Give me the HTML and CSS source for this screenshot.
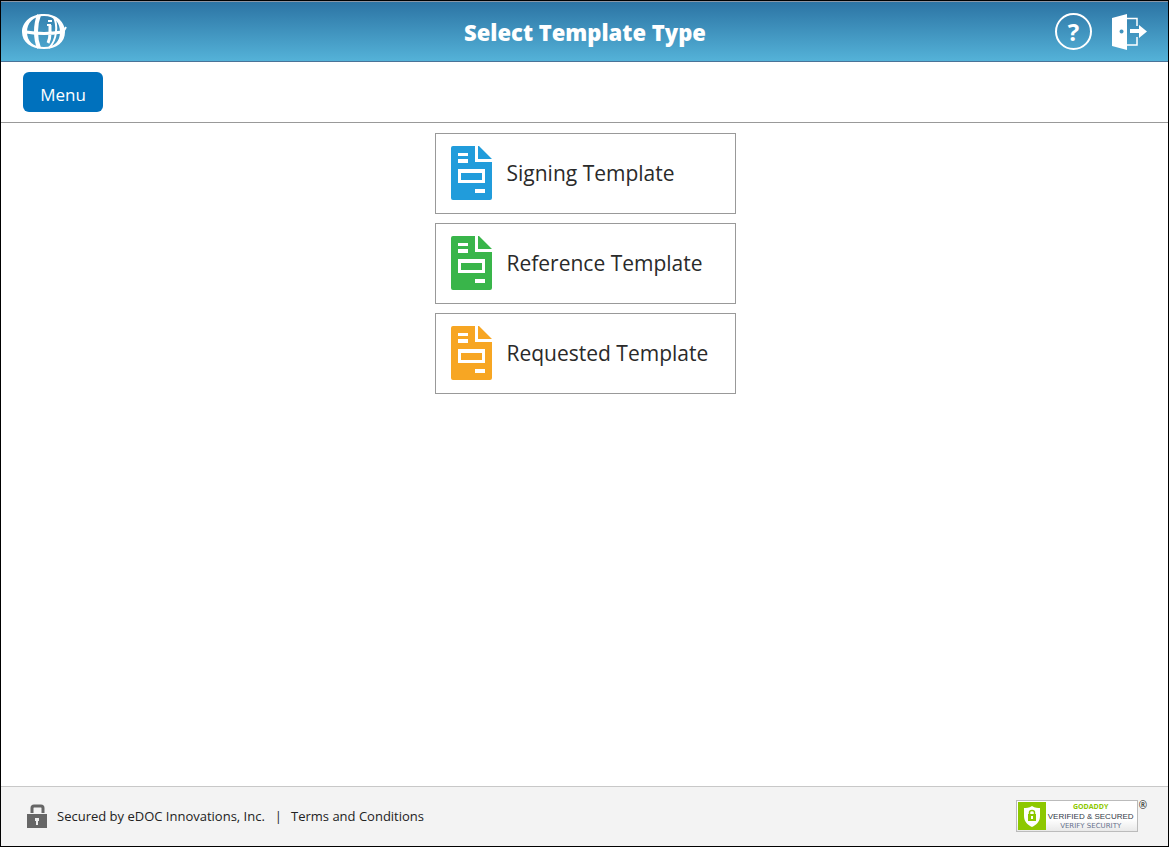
FILE: index.html
```html
<!DOCTYPE html>
<html lang="en">
<head>
<meta charset="utf-8">
<title>Select Template Type</title>
<link rel="stylesheet" href="styles.css">
</head>
<body>
<svg class="defs" aria-hidden="true">
  <symbol id="doc" viewBox="0 0 41 54">
    <path fill="currentColor" fill-rule="evenodd" d="M2 0H24V16H41V52a2 2 0 0 1-2 2H2a2 2 0 0 1-2-2V2a2 2 0 0 1 2-2ZM27 0H28L41 13H27ZM7 7V10H17V7ZM7 13V17H17V13ZM7 23V37H34V23ZM10 27H31V34H10ZM24 43V47H34V43Z"/>
  </symbol>
</svg>
<header class="header">
  <a class="logo" href="#" aria-label="Home">
    <svg width="46" height="38" viewBox="0 0 46 38">
      <path fill="#fff" fill-rule="evenodd" d="M22 1C35 1 43 9 43 19S35 36 22 36 0 29 0 19 9 1 22 1ZM22 3C11 3 5 10 5 19S11 34 22 34 38 28 38 19 33 3 22 3Z"/>
      <path fill="none" stroke="#fff" stroke-width="4" d="M17 2C13 12 13 25 17 35"/>
      <path fill="none" stroke="#fff" stroke-width="3" d="M4 19Q22 22 40 19M28 12V20Q28 26 26 30"/>
      <path fill="none" stroke="#fff" stroke-width="2" d="M25 12H29M26 8H30M32 4Q35 11 34 19Q33 29 27 35M40 21L44 14"/>
    </svg>
  </a>
  <h1 class="title">Select Template Type</h1>
  <div class="actions">
    <button class="icon-button help" type="button" aria-label="Help">?</button>
    <button class="icon-button" type="button" aria-label="Log out">
      <svg width="36" height="36" viewBox="0 0 36 36">
        <path fill="#fff" fill-rule="evenodd" d="M0 4L15 0V36L0 32ZM9.500 15.500a2 2 0 1 0 .1 0Z"/>
        <path fill="none" stroke="#fff" stroke-width="1.500" d="M15 4.500H25V12M25 23V31H15"/>
        <path fill="#fff" d="M18 15H27V11L35 17.500L27 24V19H18Z"/>
      </svg>
    </button>
  </div>
</header>
<nav class="toolbar"><button class="menu" type="button">Menu</button></nav>
<main class="content">
  <button class="card signing" type="button"><svg class="doc"><use href="#doc"/></svg>Signing Template</button>
  <button class="card reference" type="button"><svg class="doc"><use href="#doc"/></svg>Reference Template</button>
  <button class="card requested" type="button"><svg class="doc"><use href="#doc"/></svg>Requested Template</button>
</main>
<footer class="footer">
  <svg class="lock" width="20" height="24" viewBox="0 0 20 24">
    <path fill="none" stroke="#666" stroke-width="3" d="M5 9V4Q5 2 7 2H14Q16 2 16 4V9"/>
    <path fill="#666" d="M0 10H20V24H0Z"/>
    <path fill="#eee" d="M8 14H12V17H11V21H9V17H8Z"/>
  </svg>
  <span>Secured by eDOC Innovations, Inc.</span>
  <span class="divider">|</span>
  <a class="terms" href="#">Terms and Conditions</a>
  <a class="seal" href="#">
    <span class="seal-box">
      <svg width="28" height="28" viewBox="0 0 28 28">
        <path fill="#8dc800" d="M0 0H28V28H0Z"/>
        <path fill="#fff" d="M14 4C11 6 8 6 6 6V14C6 20 10 23 14 25C18 23 22 20 22 14V6C20 6 17 6 14 4Z"/>
        <path fill="#8dc800" d="M10 12H18V19H10Z"/>
        <path fill="none" stroke="#8dc800" stroke-width="1.500" d="M11.500 12V10.500Q11.500 8.500 14 8.500T16.500 10.500V12"/>
        <path fill="#fff" d="M13 14H15V17H13Z"/>
      </svg>
      <span class="seal-text">
        <span class="seal-brand">GODADDY</span>
        <span class="seal-main">VERIFIED &amp; SECURED</span>
        <span class="seal-sub">VERIFY SECURITY</span>
      </span>
    </span>
    <span class="registered">®</span>
  </a>
</footer>
</body>
</html>
```
FILE: styles.css
```css
* { box-sizing: border-box; }
body {
  margin: 0;
  min-height: 100vh;
  display: flex;
  flex-direction: column;
  border: 1px solid #000;
  background: #fff;
  color: #222;
  font-family: "Open Sans", "Noto Sans", sans-serif;
}
button { font-family: inherit; cursor: pointer; }
a { color: inherit; text-decoration: none; }
svg { display: block; flex: none; }
.defs { position: absolute; width: 0; height: 0; }
.header {
  display: grid;
  grid-template-columns: 1fr auto 1fr;
  align-items: center;
  height: 61px;
  padding: 0 20px 0 21px;
  border-top: 1px solid #8d97a5;
  border-bottom: 1px solid #4a7398;
  background: linear-gradient(#2c74a4, #54b2d8);
}
.title { margin: 0; color: #fff; font-size: 22px; line-height: 30px; font-weight: 800; }
.actions { display: flex; justify-content: flex-end; align-items: center; gap: 20px; }
.icon-button { padding: 0; border: 0; background: none; color: #fff; }
.help {
  width: 37px;
  height: 37px;
  border: 2px solid #fff;
  border-radius: 50%;
  font-size: 24px;
  line-height: 32px;
  font-weight: 700;
}
.toolbar { padding: 10px 22px; border-bottom: 1px solid #999; }
.menu {
  display: block;
  width: 80px;
  height: 40px;
  padding: 4px 0 0;
  border: 0;
  border-radius: 6px;
  background: #0071bd;
  color: #fff;
  font-size: 17px;
}
.content {
  flex: 1;
  display: flex;
  flex-direction: column;
  align-items: center;
  gap: 9px;
  padding: 10px 0 10px 1px;
}
.card {
  display: flex;
  align-items: center;
  gap: 15px;
  width: 301px;
  height: 81px;
  padding: 0 15px 1px;
  border: 1px solid #999;
  background: #fff;
  color: #2a2a2a;
  font-size: 21px;
}
.doc { width: 41px; height: 54px; }
.signing .doc { color: #219cdb; }
.reference .doc { color: #39b54a; }
.requested .doc { color: #f7a623; }
.footer {
  display: flex;
  align-items: center;
  height: 60px;
  padding: 0 21px 1px 26px;
  border-top: 1px solid #c8c8c8;
  background: #f3f3f3;
  font-size: 13px;
}
.lock { margin-right: 10px; }
.divider { margin: 0 9px 0 10px; }
.seal { display: flex; margin-left: auto; }
.seal-box {
  display: flex;
  width: 122px;
  height: 32px;
  padding: 1px;
  border: 1px solid #bbb;
  background: linear-gradient(#fff 60%, #e9e9e9);
}
.seal-text { flex: 1; display: flex; flex-direction: column; align-items: center; white-space: nowrap; }
.seal-brand { color: #8dc800; font-size: 7px; line-height: 9px; font-weight: 700; }
.seal-main { color: #333b47; font-family: "Liberation Sans", sans-serif; font-size: 8px; line-height: 11px; }
.seal-sub { color: #66708c; font-family: "DejaVu Sans", sans-serif; font-size: 7px; line-height: 8px; }
.registered { margin-left: 1px; color: #111; font-size: 10px; line-height: 10px; }
```
